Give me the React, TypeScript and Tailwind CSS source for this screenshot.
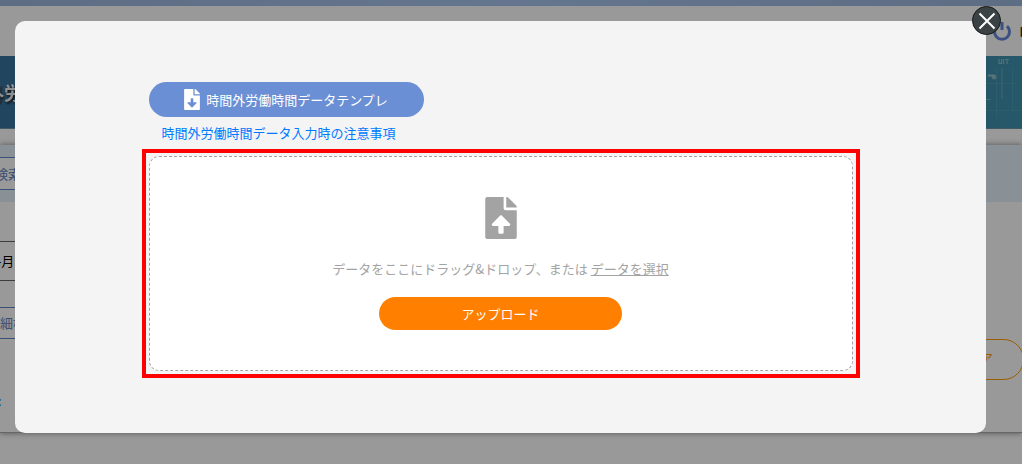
import { FaFileDownload, FaFileUpload } from "react-icons/fa";

function PowerIcon() {
  return (
    <svg viewBox="0 0 20 20" className="h-5 w-5 shrink-0" fill="none" stroke="#6488d8" strokeWidth="3" aria-hidden="true">
      <path d="M5 5.2A7.5 7.5 0 1 0 15 5.2" />
      <path d="M10 1v8" />
    </svg>
  );
}

function BackgroundPage() {
  return (
    <div className="h-full overflow-hidden bg-white text-[13px] leading-5" aria-hidden="true">
      <div className="h-1.5 bg-linear-to-r from-[#9bb6dc] via-[#a8c4ee] to-[#9bb6dc]" />
      <header className="flex h-[50px] items-center justify-end">
        <div className="-mr-[62px] flex items-center gap-[7px] whitespace-nowrap font-bold text-[#333]">
          <PowerIcon />
          <span>ログアウト</span>
        </div>
      </header>
      <div className="flex h-[73px] items-center overflow-hidden border-b border-[#6d93a8] bg-linear-to-r from-[#37749f] to-[#3f93ae]">
        <h1 className="-ml-[50px] whitespace-nowrap text-lg font-bold text-[#eeeeee] drop-shadow-[1px_2px_1px_#222]">
          時間外労働時間
        </h1>
        <svg viewBox="0 0 36 72" className="ml-auto h-[72px] w-9 shrink-0" fill="none" stroke="#a9cdd4" aria-hidden="true">
          <path d="M13 3v4.5h2.5V3M17.500 3v5M19 3.500h4M21 3v5" strokeWidth="1.2" opacity=".7" />
          <path d="M16 12v31" opacity=".4" />
          <path d="M2 19.500h6" strokeWidth="2" opacity=".8" />
          <circle cx="8" cy="21" r="2" fill="#a9cdd4" opacity=".7" />
          <path d="M0 43.500h5" opacity=".5" />
          <path d="M0 27.500h30M0 54.500h36M10.500 12v50M26.500 10v45" opacity=".12" />
        </svg>
      </div>
      <div className="mt-4 border-b border-[#aaa] shadow-[0_0_6px_#888]">
        <div className="flex h-[57px] items-center bg-[#e6f2fa]">
          <div className="h-[33px] w-40 whitespace-nowrap border-y border-[#6285c4] bg-white leading-[31px] text-[#6285c4]">
            <span className="-ml-[5px]">検索条件</span>
          </div>
        </div>
        <div className="mt-[39px] h-10 w-40 border-y border-[#666] leading-[38px] text-black">
          <span className="-ml-[6px]">4月</span>
        </div>
        <div className="mt-[26px] h-8 w-40 border-y border-[#6285c4] leading-[30px] text-[#6285c4]">
          <span className="-ml-[13px]">詳細検索</span>
        </div>
        <div className="-mr-0.5 flex h-[41px] justify-end">
          <div className="w-[180px] rounded-full border border-[#ff9c00] pr-[30px] text-right leading-[36px] text-[#ff9c00]">
            クリア
          </div>
        </div>
        <div className="h-[52px] pt-[11px] text-[#1688e0]">
          <span className="-ml-0.5">:</span>
        </div>
      </div>
    </div>
  );
}

export default function App() {
  return (
    <div className="relative h-screen overflow-hidden font-['Noto_Sans_CJK_JP',sans-serif]">
      <BackgroundPage />
      <div className="absolute inset-0 bg-black/40 pt-[21px] pr-9 pl-[15px]">
        <section
          role="dialog"
          aria-modal="true"
          aria-label="データアップロード"
          className="relative rounded-[10px] bg-[#f4f4f4] px-6 pt-[61px] pb-[55px] text-[13px] leading-5"
        >
          <button
            type="button"
            aria-label="閉じる"
            className="absolute -top-[15px] -right-[15px] flex h-[29px] w-[29px] items-center justify-center rounded-full border border-[#151819] bg-[#3b4245]"
          >
            <svg viewBox="0 0 18 18" className="h-[18px] w-[18px]" stroke="white" strokeWidth="2" aria-hidden="true">
              <path d="M1.500 1.500l15 15M16.500 1.500l-15 15" />
            </svg>
          </button>
          <div className="mx-auto max-w-[718px]">
            <div className="flex flex-col items-start pl-[7px]">
              <button
                type="button"
                className="flex h-[35px] w-[275px] items-center justify-center gap-1.5 rounded-full bg-[#6b8fd4] text-white"
              >
                <FaFileDownload className="h-[21px] w-4" aria-hidden="true" />
                時間外労働時間データテンプレ
              </button>
              <a href="#notes" className="mt-1.5 ml-[13px] text-[#007bff]">
                時間外労働時間データ入力時の注意事項
              </a>
            </div>
            <div className="mt-1.5 border-4 border-[#ff0000] p-[3px]">
              <div className="flex flex-col items-center rounded-[10px] border border-dashed border-[#a3a3a3] bg-white pt-10 pb-10 text-[#a3a3a3]">
                <FaFileUpload className="h-[42px] w-8" aria-hidden="true" />
                <p className="mt-5">
                  データをここにドラッグ&amp;ドロップ、または{" "}
                  <a href="#select" className="underline">
                    データを選択
                  </a>
                </p>
                <button type="button" className="mt-[18px] h-[33px] w-[243px] rounded-full bg-[#ff8000] text-white">
                  アップロード
                </button>
              </div>
            </div>
          </div>
        </section>
      </div>
    </div>
  );
}
